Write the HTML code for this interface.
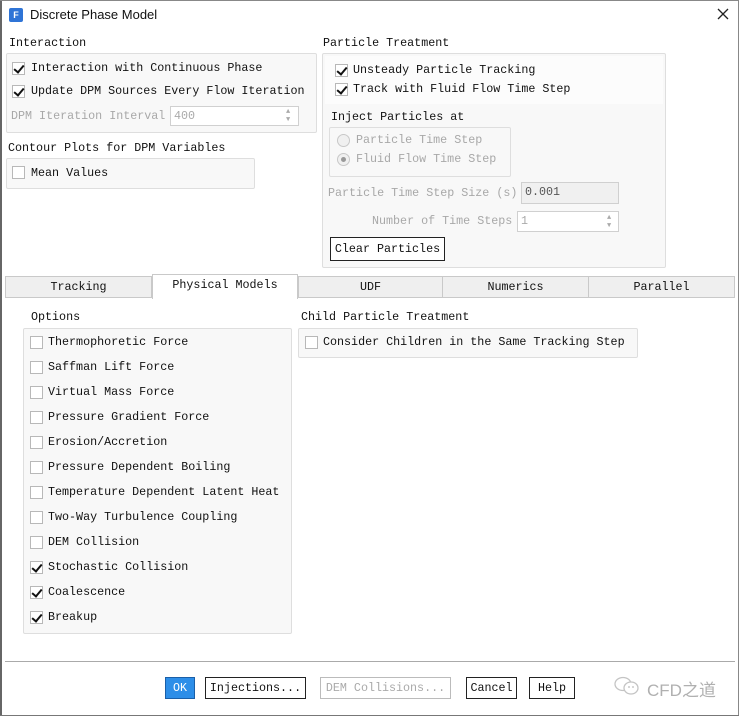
<!DOCTYPE html>
<html><head><style>
*{margin:0;padding:0;box-sizing:border-box}
body{width:739px;height:716px;background:#fff;position:relative;overflow:hidden;font-family:"Liberation Mono",monospace;font-size:11.7px;color:#111}
.a{position:absolute;white-space:nowrap}
.t{position:absolute;white-space:nowrap;line-height:14px}
.g{color:#a8a8a8}
.box{position:absolute;border:1px solid #dedede;background:#f8f8f8;border-radius:2px}
.cb{position:absolute;width:13px;height:13px;border:1px solid #b8b8b8;background:#fff}
.cb.c::after{content:"";position:absolute;left:3px;top:0px;width:4px;height:8px;border:solid #111;border-width:0 2.2px 2.2px 0;transform:rotate(40deg)}
.rd{position:absolute;width:13px;height:13px;border:1px solid #c8c8c8;border-radius:50%;background:#f0f0f0}
.rd.c::after{content:"";position:absolute;left:3px;top:3px;width:5px;height:5px;border-radius:50%;background:#999}
.inp{position:absolute;border:1px solid #d0d0d0;background:#fff;color:#aaa;padding-left:3px;line-height:18px}
.tab{position:absolute;top:276px;height:22px;background:#efefef;border:1px solid #c9c9c9;text-align:center;line-height:21px}
.btn{position:absolute;top:677px;height:22px;border:1px solid #222;background:#fff;text-align:center;line-height:20px}
</style></head><body>
<div class="a" style="left:0;top:0;width:2px;height:716px;background:#666"></div>
<div class="a" style="right:0;top:0;width:1px;height:716px;background:#888"></div>
<div class="a" style="left:0;bottom:0;width:739px;height:1px;background:#777"></div>
<div class="a" style="left:0;top:0;width:739px;height:1px;background:#888"></div>
<div class="a" style="left:9px;top:8px;width:14px;height:14px;background:#2f74d6;border-radius:2px;color:#fff;font:bold 9px 'Liberation Sans',sans-serif;text-align:center;line-height:14px">F</div>
<div class="a" style="left:30px;top:7px;font:13px 'Liberation Sans',sans-serif;color:#111">Discrete Phase Model</div>
<svg class="a" style="left:717px;top:8px" width="12" height="12"><path d="M1 1L11 11M11 1L1 11" stroke="#222" stroke-width="1.3"/></svg>

<div class="t" style="left:9px;top:36px">Interaction</div>
<div class="box" style="left:6px;top:53px;width:311px;height:80px"></div>
<div class="cb c" style="left:12px;top:62px"></div><div class="t" style="left:31px;top:61px">Interaction with Continuous Phase</div>
<div class="cb c" style="left:12px;top:85px"></div><div class="t" style="left:31px;top:84px">Update DPM Sources Every Flow Iteration</div>
<div class="t g" style="left:11px;top:109px">DPM Iteration Interval</div>
<div class="inp" style="left:170px;top:106px;width:129px;height:20px">400</div>
<div class="a" style="left:286px;top:108px;font-size:7px;color:#aaa;line-height:8px">▲<br>▼</div>

<div class="t" style="left:8px;top:141px">Contour Plots for DPM Variables</div>
<div class="box" style="left:6px;top:158px;width:249px;height:31px"></div>
<div class="cb" style="left:12px;top:166px"></div><div class="t" style="left:31px;top:166px">Mean Values</div>

<div class="t" style="left:323px;top:36px">Particle Treatment</div>
<div class="box" style="left:322px;top:53px;width:344px;height:215px"></div>
<div class="a" style="left:325px;top:56px;width:338px;height:48px;background:#fcfcfc"></div>
<div class="cb c" style="left:335px;top:64px"></div><div class="t" style="left:353px;top:63px">Unsteady Particle Tracking</div>
<div class="cb c" style="left:335px;top:83px"></div><div class="t" style="left:353px;top:82px">Track with Fluid Flow Time Step</div>
<div class="t" style="left:331px;top:110px">Inject Particles at</div>
<div class="box" style="left:329px;top:127px;width:182px;height:50px"></div>
<div class="rd" style="left:337px;top:134px"></div><div class="t g" style="left:356px;top:133px">Particle Time Step</div>
<div class="rd c" style="left:337px;top:153px"></div><div class="t g" style="left:356px;top:152px">Fluid Flow Time Step</div>
<div class="t g" style="left:328px;top:186px">Particle Time Step Size (s)</div>
<div class="inp" style="left:521px;top:182px;width:98px;height:22px;background:#f0f0f0;color:#555">0.001</div>
<div class="t g" style="left:372px;top:214px">Number of Time Steps</div>
<div class="inp" style="left:517px;top:211px;width:102px;height:21px">1</div>
<div class="a" style="left:607px;top:214px;font-size:7px;color:#aaa;line-height:8px">▲<br>▼</div>
<div class="btn" style="left:330px;top:237px;width:115px;height:24px;line-height:22px">Clear Particles</div>

<div class="a" style="left:5px;top:297px;width:730px;height:1px;background:#c9c9c9"></div>
<div class="tab" style="left:5px;width:147px">Tracking</div>
<div class="tab" style="left:152px;top:274px;width:146px;height:25px;background:#fff;border-bottom:none">Physical Models</div>
<div class="tab" style="left:298px;width:145px">UDF</div>
<div class="tab" style="left:442px;width:147px">Numerics</div>
<div class="tab" style="left:588px;width:147px">Parallel</div>

<div class="t" style="left:31px;top:310px">Options</div>
<div class="box" style="left:23px;top:328px;width:269px;height:306px"></div>
<div class="cb" style="left:30px;top:336px"></div><div class="t" style="left:48px;top:335px">Thermophoretic Force</div>
<div class="cb" style="left:30px;top:361px"></div><div class="t" style="left:48px;top:360px">Saffman Lift Force</div>
<div class="cb" style="left:30px;top:386px"></div><div class="t" style="left:48px;top:385px">Virtual Mass Force</div>
<div class="cb" style="left:30px;top:411px"></div><div class="t" style="left:48px;top:410px">Pressure Gradient Force</div>
<div class="cb" style="left:30px;top:436px"></div><div class="t" style="left:48px;top:435px">Erosion/Accretion</div>
<div class="cb" style="left:30px;top:461px"></div><div class="t" style="left:48px;top:460px">Pressure Dependent Boiling</div>
<div class="cb" style="left:30px;top:486px"></div><div class="t" style="left:48px;top:485px">Temperature Dependent Latent Heat</div>
<div class="cb" style="left:30px;top:511px"></div><div class="t" style="left:48px;top:510px">Two-Way Turbulence Coupling</div>
<div class="cb" style="left:30px;top:536px"></div><div class="t" style="left:48px;top:535px">DEM Collision</div>
<div class="cb c" style="left:30px;top:561px"></div><div class="t" style="left:48px;top:560px">Stochastic Collision</div>
<div class="cb c" style="left:30px;top:586px"></div><div class="t" style="left:48px;top:585px">Coalescence</div>
<div class="cb c" style="left:30px;top:611px"></div><div class="t" style="left:48px;top:610px">Breakup</div>

<div class="t" style="left:301px;top:310px">Child Particle Treatment</div>
<div class="box" style="left:298px;top:328px;width:340px;height:30px"></div>
<div class="cb" style="left:305px;top:336px"></div><div class="t" style="left:323px;top:335px">Consider Children in the Same Tracking Step</div>

<div class="a" style="left:5px;top:661px;width:730px;height:1px;background:#aaa"></div>
<div class="btn" style="left:165px;width:30px;background:#2d8ee8;color:#fff;border-color:#1a5fa8">OK</div>
<div class="btn" style="left:205px;width:101px">Injections...</div>
<div class="btn" style="left:320px;width:131px;border-color:#bbb;color:#aaa">DEM Collisions...</div>
<div class="btn" style="left:466px;width:51px">Cancel</div>
<div class="btn" style="left:529px;width:46px">Help</div>
<svg class="a" style="left:612px;top:674px" width="30" height="24"><ellipse cx="11" cy="10" rx="8" ry="6.5" fill="none" stroke="#c4c4c4" stroke-width="1.3"/><ellipse cx="19" cy="14" rx="7" ry="6" fill="#fff" stroke="#c4c4c4" stroke-width="1.3"/><circle cx="17" cy="13" r="0.9" fill="#bbb"/><circle cx="21" cy="13" r="0.9" fill="#bbb"/></svg>
<div class="a" style="left:647px;top:676px;font:17px 'Liberation Sans','Noto Sans CJK SC',sans-serif;color:#b0b0b0">CFD之道</div>
</body></html>
